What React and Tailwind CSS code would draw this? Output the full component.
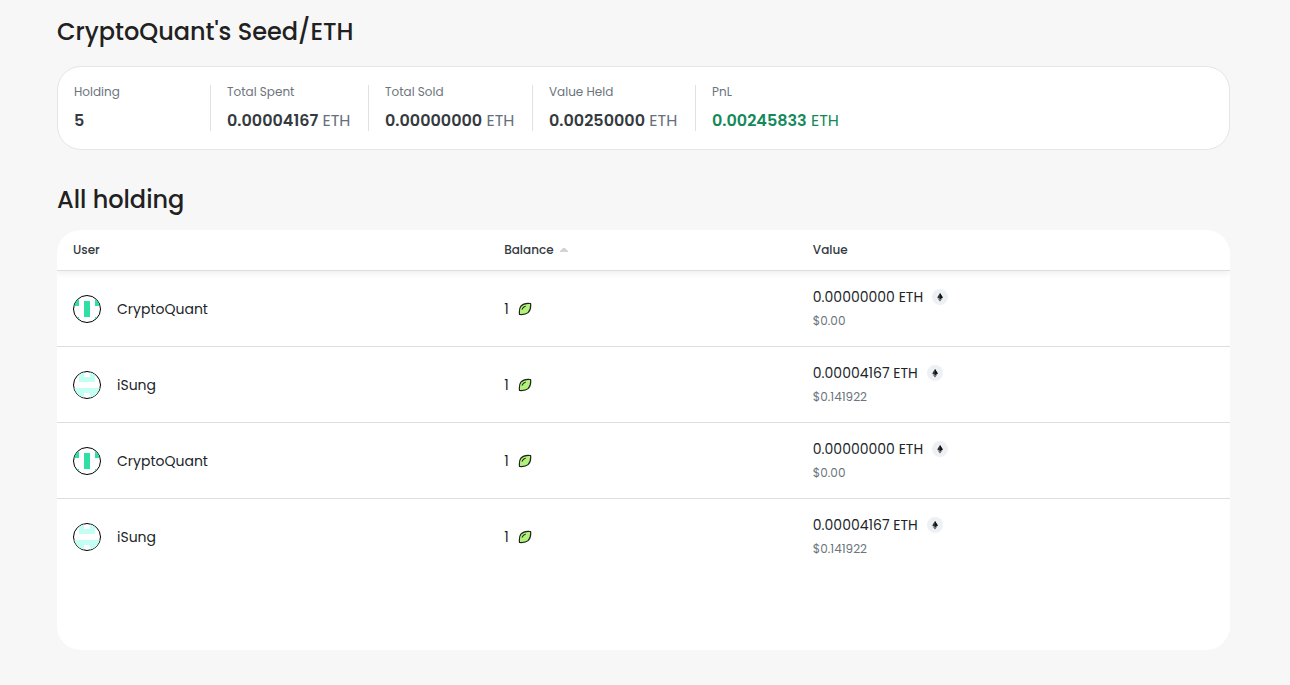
import React from "react";

const stats = [
  { label: "Holding", value: "5" },
  { label: "Total Spent", value: "0.00004167", unit: "ETH" },
  { label: "Total Sold", value: "0.00000000", unit: "ETH" },
  { label: "Value Held", value: "0.00250000", unit: "ETH" },
  { label: "PnL", value: "0.00245833", unit: "ETH", profit: true },
];

const holders = [
  { id: 1, user: "CryptoQuant", balance: 1, value: "0.00000000", usd: "$0.00" },
  { id: 2, user: "iSung", balance: 1, value: "0.00004167", usd: "$0.141922" },
  { id: 3, user: "CryptoQuant", balance: 1, value: "0.00000000", usd: "$0.00" },
  { id: 4, user: "iSung", balance: 1, value: "0.00004167", usd: "$0.141922" },
];

// 5x5 identicon patterns
const avatars = {
  CryptoQuant: { color: "#2fe0a5", path: "M0 0h1v2H0zM4 0h1v2H4zM2 1h1v3H2zM0 4h1v1H0zM4 4h1v1H4z" },
  iSung: { color: "#c3fff3", path: "M1 0h1v1h1V0h1v2H1zM0 3h5v2H3V4H2v1H0z" },
};

const Avatar = ({ user }) => (
  <span className="block size-7 shrink-0 overflow-hidden rounded-full border border-black bg-white">
    <svg viewBox="0 0 5 5" className="size-full" shapeRendering="crispEdges" aria-hidden="true">
      <path d={avatars[user].path} fill={avatars[user].color} />
    </svg>
  </span>
);

const SeedIcon = () => (
  <svg viewBox="0 0 14 14" className="size-3.5" fill="none" aria-hidden="true">
    <path
      d="M12.6 1.5C8.7.9 5 1.7 2.9 4.2 1.3 6.2 1.1 8.6 1.5 12.5c4 .3 6.7-.2 8.6-1.9 2.3-2.1 2.9-5.2 2.5-9.1Z"
      fill="#b2f27c"
      stroke="#20251c"
      strokeWidth="1.2"
      strokeLinejoin="round"
    />
    <path d="M4.2 7.2C4.7 5.7 5.7 4.7 7.3 4.2" stroke="#20251c" strokeWidth="1.1" strokeLinecap="round" />
  </svg>
);

const EthIcon = () => (
  <svg viewBox="0 0 16 16" className="size-4" aria-hidden="true">
    <circle cx="8" cy="8" r="8" fill="#edf0f4" />
    <path d="M8 4 5.2 8.4 8 10l2.8-1.6z" fill="#343434" />
    <path d="M8 4v6l2.8-1.6z" fill="#111111" />
    <path d="M5.4 9 8 12.5 10.6 9 8 10.5z" fill="#555555" />
  </svg>
);

const App = () => {
  return (
    <div className="min-h-screen bg-[#f7f7f7] pt-3 pr-[60px] pb-9 pl-[57px] font-['Poppins','Inter',sans-serif] text-[#212529]">
      <h1 className="text-2xl leading-10 font-medium text-[#212121]">CryptoQuant's Seed/ETH</h1>

      {/* Summary */}
      <section className="mt-3.5 rounded-3xl border border-[#e5e5e5] bg-white py-[18px]">
        <dl className="grid grid-cols-[153px_158px_164px_163px_auto]">
          {stats.map((stat) => (
            <div key={stat.label} className="h-[46px] border-r border-[#dee2e6] pl-4 last:border-r-0">
              <dt className="text-xs leading-3.5 text-[#6c757d]">{stat.label}</dt>
              <dd
                className={
                  stat.profit
                    ? "mt-2 text-base leading-7 whitespace-nowrap text-[#13895a]"
                    : "mt-2 text-base leading-7 whitespace-nowrap text-[#66707c]"
                }
              >
                <span className={stat.profit ? "font-semibold" : "font-semibold text-[#343a40]"}>{stat.value}</span>
                {stat.unit && ` ${stat.unit}`}
              </dd>
            </div>
          ))}
        </dl>
      </section>

      <h2 className="mt-[30px] text-2xl leading-10 font-medium text-[#212121]">All holding</h2>

      {/* Holders */}
      <section className="mt-2.5 min-h-[420px] overflow-hidden rounded-3xl bg-white">
        <table className="w-full table-fixed border-separate border-spacing-0 text-left">
          <thead className="shadow-[0_3px_6px_rgba(0,0,0,0.06)]">
            <tr className="h-[41px] text-xs font-medium text-[#343a40]">
              <th scope="col" className="w-7/19 border-b border-[#dedede] px-4 font-medium">User</th>
              <th scope="col" className="w-5/19 border-b border-[#dedede] px-[15px] font-medium">
                <button type="button" className="flex items-center gap-1.5 font-medium">
                  Balance
                  <svg viewBox="0 0 8 4" className="h-1 w-2" aria-hidden="true">
                    <path d="M0 4V3l3-3h2l3 3v1z" fill="#d3d3d3" />
                  </svg>
                </button>
              </th>
              <th scope="col" className="border-b border-[#dedede] px-[15px] font-medium">Value</th>
            </tr>
          </thead>
          <tbody>
            {holders.map((holder) => (
              <tr key={holder.id} className="group h-[76px] text-sm">
                <td className="border-b border-[#dedede] px-4 group-last:border-b-0">
                  <div className="flex items-center gap-4">
                    <Avatar user={holder.user} />
                    {holder.user}
                  </div>
                </td>
                <td className="border-b border-[#dedede] px-[15px] group-last:border-b-0">
                  <div className="flex items-center gap-[9px]">
                    {holder.balance}
                    <SeedIcon />
                  </div>
                </td>
                <td className="border-b border-[#dedede] px-[15px] group-last:border-b-0">
                  <div className="flex items-center gap-[9px] leading-6">
                    {holder.value} ETH
                    <EthIcon />
                  </div>
                  <div className="text-xs leading-6 text-[#6c757d]">{holder.usd}</div>
                </td>
              </tr>
            ))}
          </tbody>
        </table>
      </section>
    </div>
  );
};

export default App;
